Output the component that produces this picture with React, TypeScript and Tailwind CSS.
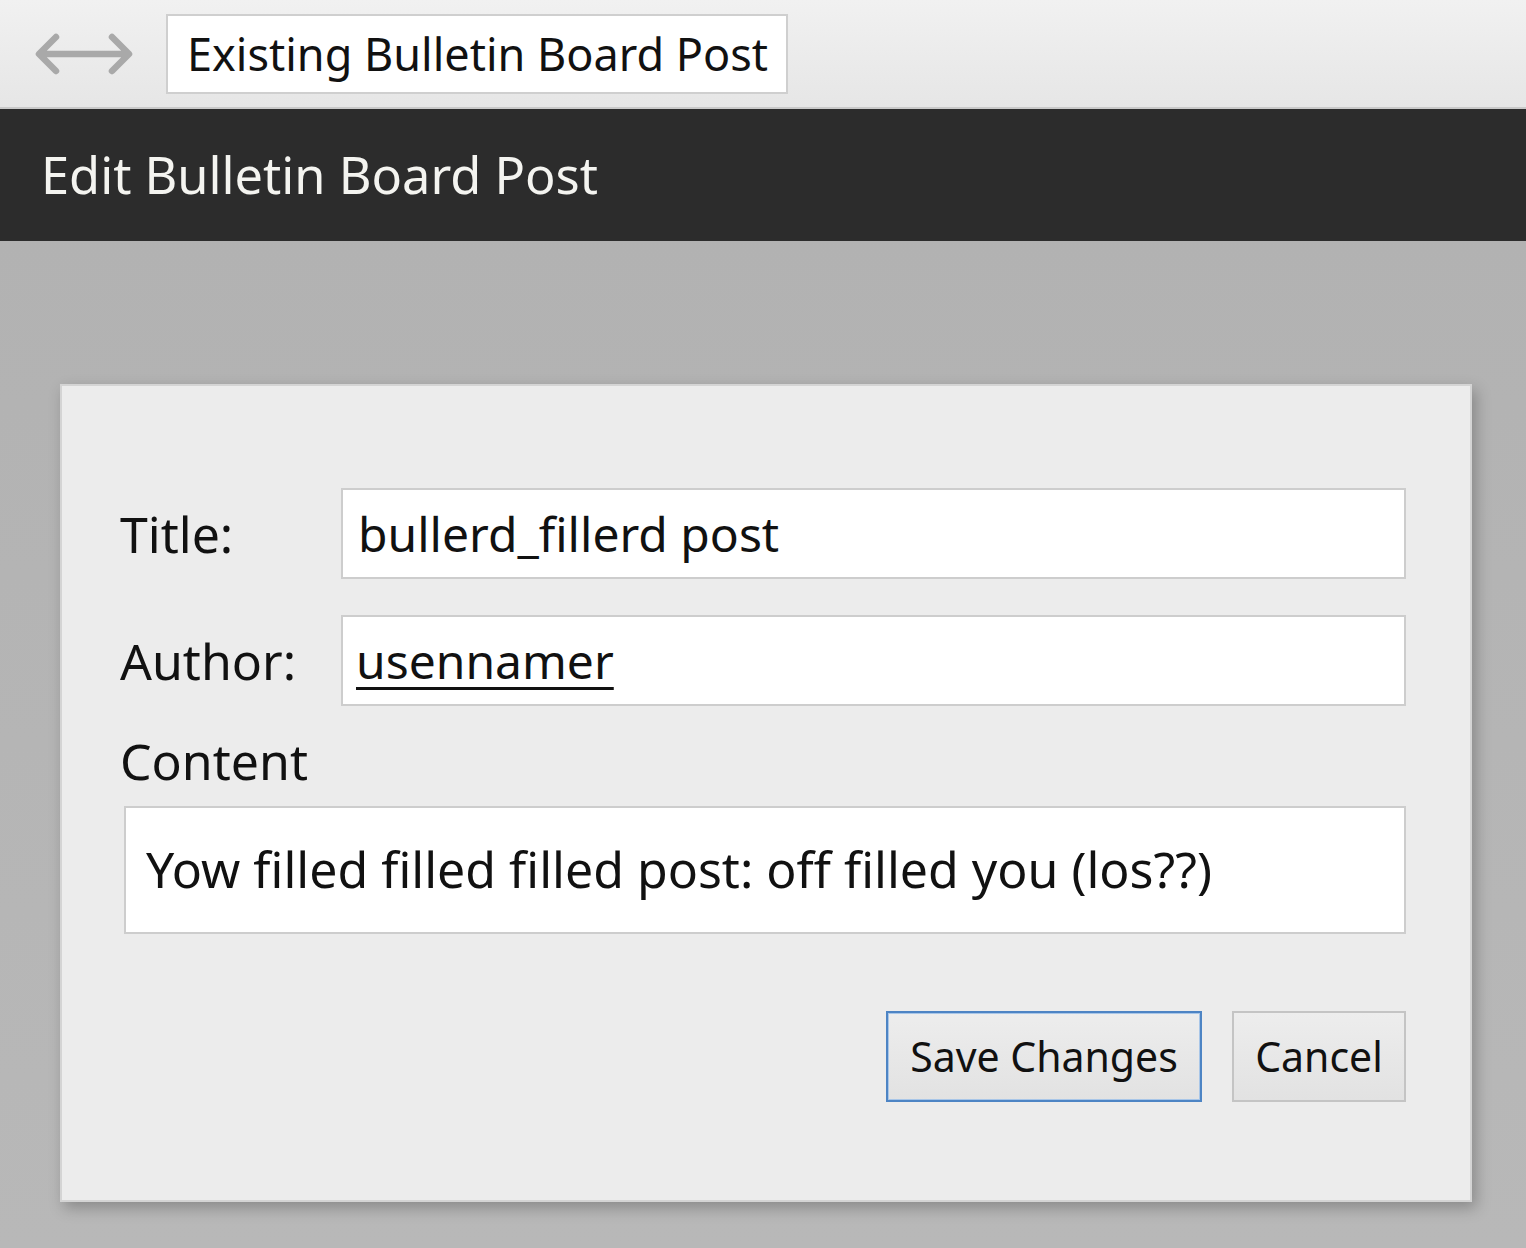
import React from "react";

function DoubleArrow() {
  return (
    <svg width="100" height="46" viewBox="0 0 100 46" fill="none" className="shrink-0">
      <path
        d="M6 23 H94 M22 6 L5 23 L22 40 M78 6 L95 23 L78 40"
        stroke="#a9a9a9"
        strokeWidth="6.5"
        strokeLinecap="round"
        strokeLinejoin="round"
      />
    </svg>
  );
}

export default function App() {
  return (
    <div className="flex h-[1248px] w-[1526px] flex-col overflow-hidden bg-[#b4b4b4] font-['Noto_Sans',sans-serif] text-[#111]">
      {/* top bar */}
      <div className="flex h-[109px] shrink-0 items-center gap-[32px] border-b-2 border-[#c9c9c9] bg-gradient-to-b from-[#f1f1f1] to-[#e6e6e6] pl-[34px]">
        <DoubleArrow />
        <div className="flex h-[80px] items-center border-2 border-[#cfcfcf] bg-white pl-[19px] pr-[18px] text-[45px] leading-none">
          Existing Bulletin Board Post
        </div>
      </div>
      {/* dark header */}
      <div className="flex h-[132px] shrink-0 items-center bg-[#2c2c2c] pl-[41px] text-[50.5px] leading-none text-[#f4f4f0]">
        Edit Bulletin Board Post
      </div>
      {/* content area */}
      <div className="flex flex-1 flex-col bg-gradient-to-b from-[#b2b2b2] to-[#b8b8b8] pl-[60px] pr-[54px] pt-[143px]">
        <div className="flex h-[818px] flex-col border-2 border-[#d4d4d4] bg-[#ececec] pl-[58px] pr-[64px] pt-[102px] shadow-[4px_6px_14px_rgba(0,0,0,0.25)]">
          <div className="flex items-center">
            <div className="w-[221px] text-[50px] leading-none">Title:</div>
            <div className="flex h-[91px] flex-1 items-center border-2 border-[#cdcdcd] bg-white pl-[15px] text-[48px] leading-none">
              bullerd_fillerd post
            </div>
          </div>
          <div className="mt-[36px] flex items-center">
            <div className="w-[221px] text-[50px] leading-none">Author:</div>
            <div className="flex h-[91px] flex-1 items-center border-2 border-[#cdcdcd] bg-white pl-[13px] text-[48px] leading-none">
              <span className="underline decoration-[3px] underline-offset-[8px]">usennamer</span>
            </div>
          </div>
          <div className="mt-[26px] h-[58px] text-[50px] leading-[58px]">Content</div>
          <div className="ml-[4px] mt-[16px] flex h-[128px] items-center border-2 border-[#cdcdcd] bg-white pb-[2px] pl-[20px] text-[50px] leading-none">
            Yow filled filled filled post: off filled you (los??)
          </div>
          <div className="mt-[77px] flex justify-end gap-[30px]">
            <button className="flex h-[91px] w-[316px] items-center justify-center border-2 border-[#4d84c4] bg-gradient-to-b from-[#ededed] to-[#e2e2e2] text-[41px] leading-none text-[#111] shadow-[inset_0_0_0_1px_#a8c6e8]">
              Save Changes
            </button>
            <button className="flex h-[91px] w-[174px] items-center justify-center border-2 border-[#c4c4c4] bg-gradient-to-b from-[#ededed] to-[#e2e2e2] text-[41px] leading-none text-[#111]">
              Cancel
            </button>
          </div>
        </div>
      </div>
    </div>
  );
}
